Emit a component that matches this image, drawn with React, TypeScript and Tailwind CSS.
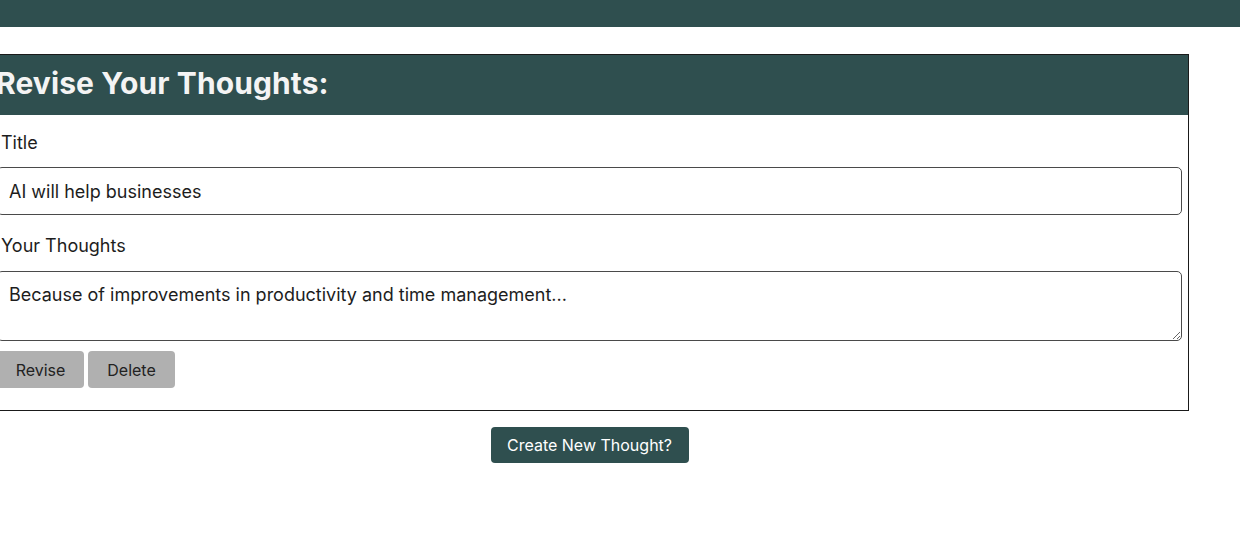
import React from 'react'

const App = () => {
  return (
    <div className="min-h-screen bg-white font-['Inter',sans-serif] text-[#1d1d1d]">
      {/* top bar */}
      <div className="h-[27px] bg-[#2f4f4f]"></div>

      <div className="mt-[27px] ml-[-10px] w-[1199px]">
        {/* card */}
        <div className="border border-[#1a1a1a]">
          <div className="h-[60px] bg-[#2f4f4f] px-[5px] pb-[4px] flex items-center">
            <h1 className="text-[30px] font-bold text-[#f4f4f4] tracking-[0.1px]">Revise Your Thoughts:</h1>
          </div>

          <form className="px-[6px] pt-[16px] pb-[22px]">
            <label className="block text-[18px] leading-[24px] pl-[4px]">Title</label>
            <input
              className="mt-[12px] block w-full h-[48px] border border-[#4a4a4a] rounded-[5px] px-[11px] text-[18px] outline-none"
              defaultValue="AI will help businesses"
            />

            <label className="mt-[19px] block text-[18px] leading-[24px] pl-[4px]">Your Thoughts</label>
            <textarea
              className="mt-[13px] block w-full h-[70px] border border-[#4a4a4a] rounded-[5px] px-[11px] pt-[11px] text-[18px] leading-[24px] outline-none"
              defaultValue="Because of improvements in productivity and time management..."
            />

            <div className="mt-[10px] flex gap-[4px]">
              <button type="button" className="w-[87px] h-[37px] bg-[#b0b0b0] rounded-[4px] text-[16px] text-[#222]">
                Revise
              </button>
              <button type="button" className="w-[87px] h-[37px] bg-[#b0b0b0] rounded-[4px] text-[16px] text-[#222]">
                Delete
              </button>
            </div>
          </form>
        </div>

        <div className="mt-[16px] flex justify-center">
          <button type="button" className="w-[198px] h-[36px] bg-[#2f4f4f] rounded-[4px] text-[16px] text-white">
            Create New Thought?
          </button>
        </div>
      </div>
    </div>
  )
}

export default App
